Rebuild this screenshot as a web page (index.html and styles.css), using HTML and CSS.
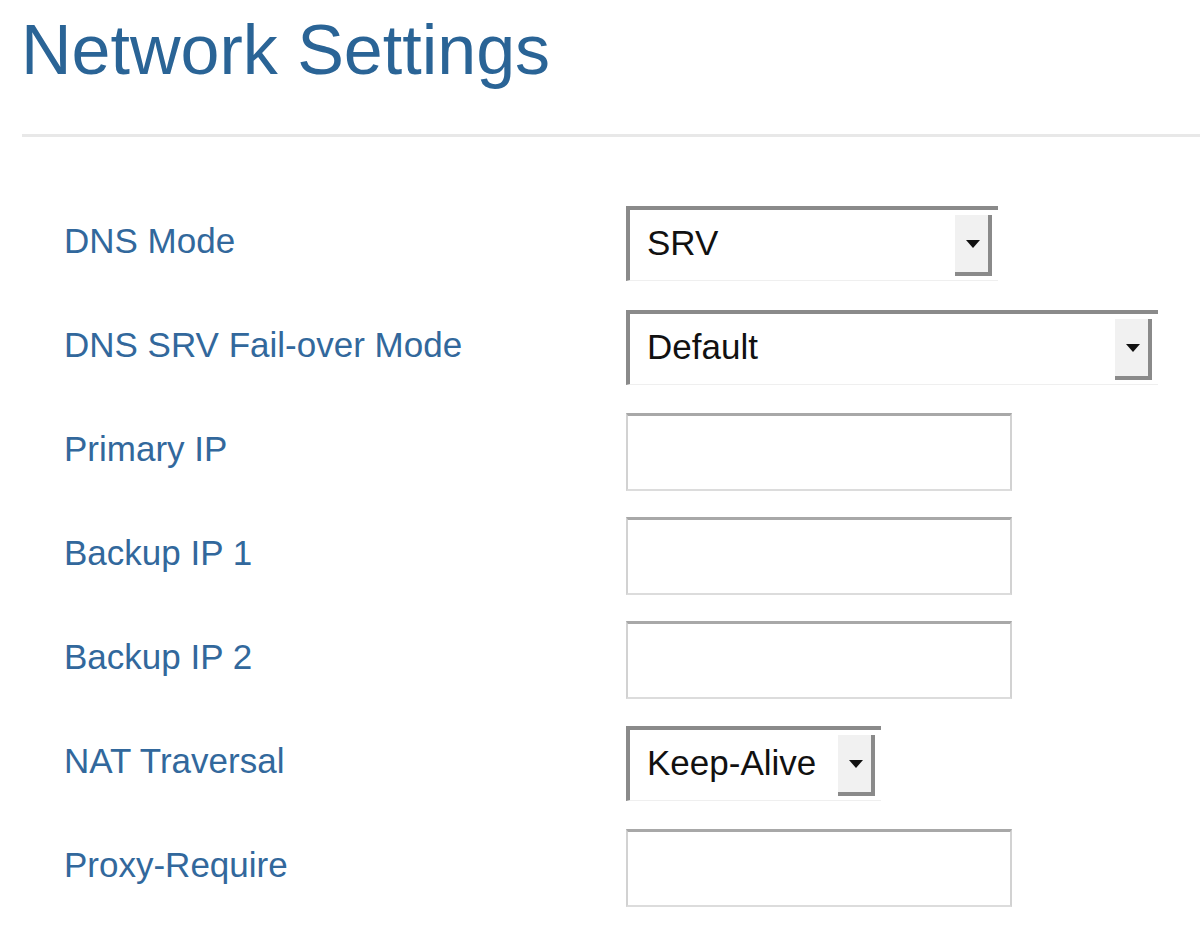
FILE: index.html
```html
<!DOCTYPE html>
<html>
<head>
<meta charset="utf-8">
<link rel="stylesheet" href="styles.css">
</head>
<body>
<div class="page">
  <h1 class="title">Network Settings</h1>
  <hr class="rule">
  <div class="form">
    <div class="row">
      <div class="label">DNS Mode</div>
      <div class="select w-srv"><span class="value">SRV</span><span class="btn"><i class="arrow"></i></span></div>
    </div>
    <div class="row">
      <div class="label">DNS SRV Fail-over Mode</div>
      <div class="select w-default"><span class="value">Default</span><span class="btn"><i class="arrow"></i></span></div>
    </div>
    <div class="row">
      <div class="label">Primary IP</div>
      <div class="input"></div>
    </div>
    <div class="row">
      <div class="label">Backup IP 1</div>
      <div class="input"></div>
    </div>
    <div class="row">
      <div class="label">Backup IP 2</div>
      <div class="input"></div>
    </div>
    <div class="row">
      <div class="label">NAT Traversal</div>
      <div class="select w-keep"><span class="value">Keep-Alive</span><span class="btn"><i class="arrow"></i></span></div>
    </div>
    <div class="row">
      <div class="label">Proxy-Require</div>
      <div class="input"></div>
    </div>
  </div>
</div>
</body>
</html>
```

FILE: styles.css
```css
html, body {
  margin: 0;
  padding: 0;
  background: #ffffff;
}
body {
  font-family: "Liberation Sans", Arial, sans-serif;
  width: 1200px;
  height: 927px;
  overflow: hidden;
}
.page {
  padding-left: 21px;
}
.title {
  margin: 0;
  padding-top: 10px;
  font-size: 70px;
  line-height: 80px;
  font-weight: normal;
  color: #2a6496;
}
.rule {
  margin: 44px 0 0 1px;
  border: 0;
  height: 3px;
  background: #e8e8e8;
}
.form {
  margin-top: 68px;
  padding-left: 43px;
  display: flex;
  flex-direction: column;
  gap: 26px;
}
.row {
  display: grid;
  grid-template-columns: 562px auto;
  height: 78px;
  align-items: start;
}
.label {
  font-size: 35px;
  line-height: 40px;
  padding-top: 16px;
  color: #32689c;
}
.input {
  width: 382px;
  height: 73px;
  border-top: 3px solid #a8a8a8;
  border-left: 2px solid #d2d2d2;
  border-right: 2px solid #d2d2d2;
  border-bottom: 2px solid #dcdcdc;
  background: #fff;
}
.select {
  display: flex;
  align-items: stretch;
  height: 61px;
  margin-top: 1px;
  border-top: 4px solid #8a8a8a;
  border-left: 4px solid #8a8a8a;
  border-bottom: 1px solid #efefef;
  padding: 5px 6px 4px 0;
  background: #fff;
  box-sizing: content-box;
}
.w-srv { width: 362px; }
.w-default { width: 522px; }
.w-keep { width: 245px; }
.value {
  flex: 1;
  padding-left: 17px;
  font-size: 35px;
  line-height: 40px;
  padding-top: 8px;
  color: #111;
}
.btn {
  width: 33px;
  background: #f1f1f1;
  border-right: 4px solid #8a8a8a;
  border-bottom: 4px solid #8a8a8a;
  display: flex;
  align-items: center;
  justify-content: center;
}
.arrow {
  display: block;
  width: 0;
  height: 0;
  border-left: 7px solid transparent;
  border-right: 7px solid transparent;
  border-top: 8px solid #111;
  margin-left: 3px;
}
```
